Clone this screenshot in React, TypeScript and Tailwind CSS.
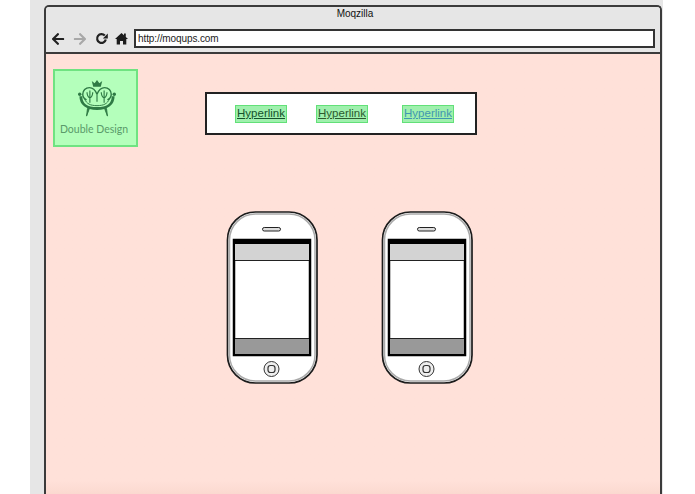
import React from 'react';
import { FaArrowLeft, FaArrowRight } from 'react-icons/fa';

function ReloadIcon() {
  return (
    <svg width="13" height="13" viewBox="0 0 13 13" fill="none">
      <path d="M10.800 7.600a4.400 4.400 0 1 1-1-4" stroke="#222" strokeWidth="2.200" />
      <path d="M12.800 1.400v5H7.800z" fill="#222" />
    </svg>
  );
}

function HomeIcon() {
  return (
    <svg width="13" height="13" viewBox="0 0 13 13" fill="#1c1c1c">
      <path d="M6.500 1L0 7h1.700v5.500h3.300V9h3v3.500h3.300V7H13L10.800 5V1.500H9V3.300z" />
    </svg>
  );
}

function LogoMark() {
  return (
    <svg width="38" height="38" viewBox="0 0 40 40" fill="none" stroke="#2f7a45" className="ml-[2px]">
      <path d="M14.500 1l3 2.500L20 0l2.500 3.500L25.500 1l-1.500 6h-8z" fill="#2f7a45" stroke="none" />
      <path d="M20 15c-2-5-5-7-8-7-4 0-7 3-7 7 0 3 2 5 4 6" strokeWidth="1.500" />
      <path d="M20 15c2-5 5-7 8-7 4 0 7 3 7 7 0 3-2 5-4 6" strokeWidth="1.500" />
      <path d="M3 17c0 8 6 13 17 13s17-5 17-13" strokeWidth="3" />
      <path d="M7 20c2 5 6 7 13 7s11-2 13-7" strokeWidth="1" />
      <circle cx="1.800" cy="15" r="1.800" fill="#2f7a45" stroke="none" />
      <circle cx="38.200" cy="15" r="1.800" fill="#2f7a45" stroke="none" />
      <path d="M12.500 11v13M27.500 11v13M9.500 13c0 4 1 5 3 6 2-1 3-2 3-6M24.500 13c0 4 1 5 3 6 2-1 3-2 3-6M20 15v8" strokeWidth="1.200" />
      <path d="M10 30l-1 8 3-8zM30 30l1 8-3-8z" fill="#2f7a45" strokeWidth="1" />
    </svg>
  );
}

function Phone() {
  return (
    <svg width="92" height="174" viewBox="0 0 92 174" className="block">
      <rect x="1.500" y="1" width="89.500" height="171" rx="28" fill="#fff" stroke="#1c1c1c" strokeWidth="1.700" />
      <rect x="3.500" y="3" width="85.500" height="167" rx="26" fill="#fff" stroke="#aaa" strokeWidth="1.500" />
      <rect x="36.500" y="16.500" width="18" height="3.500" rx="1.750" fill="#ddd" stroke="#222" strokeWidth="1" />
      <rect x="8" y="29" width="76" height="115" fill="#fff" stroke="#000" strokeWidth="2.500" />
      <rect x="7" y="28" width="78" height="5" fill="#000" />
      <rect x="9" y="33" width="74" height="16" fill="#d3d3d3" />
      <rect x="9" y="49" width="74" height="1" fill="#222" />
      <rect x="9" y="127" width="74" height="1" fill="#222" />
      <rect x="9" y="128" width="74" height="15" fill="#999" />
      <circle cx="45.500" cy="158" r="7.500" fill="#eee" stroke="#333" strokeWidth="1" />
      <rect x="42" y="154.500" width="7" height="7" rx="2.500" fill="#eee" stroke="#333" strokeWidth="1.200" />
    </svg>
  );
}

const links = [
  { color: 'text-[#14522c]', margin: 'ml-[28px]' },
  { color: 'text-[#2c5a30]', margin: 'ml-[29px]' },
  { color: 'text-[#3f97b0]', margin: 'ml-[34px]' },
];

export default function App() {
  return (
    <div className="flex h-[494px] w-[695px] overflow-hidden bg-white font-['Liberation_Sans',sans-serif]">
      <div className="ml-[30px] flex h-full w-[633px] bg-[#e6e6e6] pl-[14px] pt-[5px]">
        <div className="flex h-[489px] w-[618px] flex-col overflow-hidden rounded-t-[5px] border-x-2 border-t-2 border-[#3b3b3b]">
          <div className="flex h-[47px] flex-col border-b-2 border-[#3b3b3b] bg-[#e6e6e6]">
            <div className="pl-[4px] pt-[1px] text-center text-[10px] leading-[12px] text-[#111]">Moqzilla</div>
            <div className="mt-[9px] flex items-center pl-[5px]">
              <FaArrowLeft className="h-[14px] w-[14px] text-[#222]" />
              <FaArrowRight className="ml-[8px] h-[14px] w-[14px] text-[#a8a8a8]" />
              <div className="ml-[8px]">
                <ReloadIcon />
              </div>
              <div className="ml-[7px]">
                <HomeIcon />
              </div>
              <div className="ml-[6px] flex h-[19px] w-[521px] items-center border-2 border-[#333] bg-white pb-[1px] pl-[2px] text-[10px] tracking-[-0.1px] text-[#222]">
                http://moqups.com
              </div>
            </div>
          </div>
          <div className="flex-1 bg-gradient-to-b from-[#ffe1d9] from-[97%] to-[#fbd9d0] pl-[7px] pt-[15px]">
            <div className="flex items-start">
              <div className="flex h-[78px] w-[85px] flex-col items-center border-2 border-[#6fe381] bg-[#b4ffbb] pt-[9px]">
                <LogoMark />
                <div className="mt-[4px] whitespace-nowrap pr-[3px] font-['Lato',sans-serif] text-[10.500px] font-normal leading-[14px] text-[#5a9a6a]">
                  Double Design
                </div>
              </div>
              <div className="ml-[67px] mt-[23px] flex h-[43px] w-[272px] items-center border-2 border-[#222] bg-white">
                {links.map((l, i) => (
                  <a
                    key={i}
                    className={`${l.margin} flex h-[18px] w-[52px] items-center justify-center border border-[#62e078] bg-[#9ff0ad] text-[11.500px] underline ${l.color}`}
                  >
                    Hyperlink
                  </a>
                ))}
              </div>
            </div>
            <div className="ml-[173px] mt-[64px] flex gap-[63px]">
              <Phone />
              <Phone />
            </div>
          </div>
        </div>
      </div>
    </div>
  );
}
